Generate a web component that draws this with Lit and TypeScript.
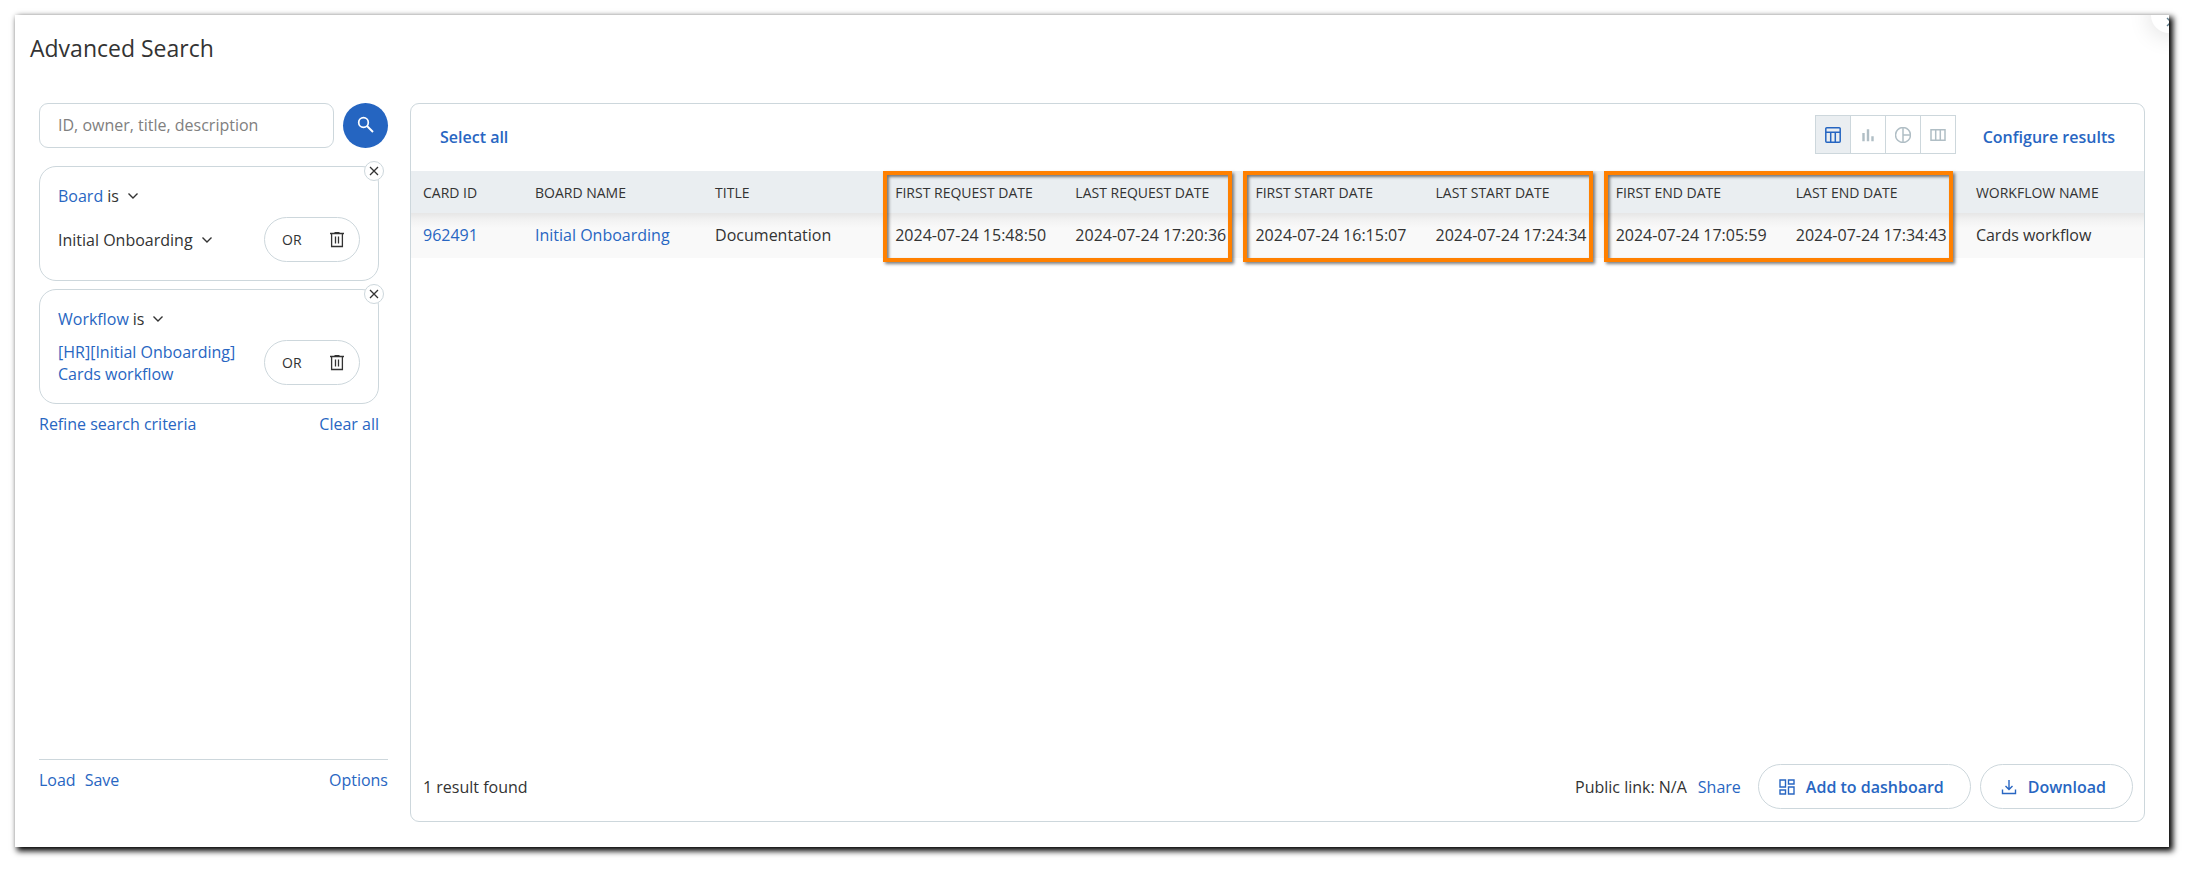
import { LitElement, html, css, svg, nothing } from "lit";
import { customElement, state } from "lit/decorators.js";
import { classMap } from "lit/directives/class-map.js";

const chevron = html`<svg class="chevron" width="12" height="8" viewBox="0 0 12 8" aria-hidden="true">
  <path d="M1.500 1.500 6 6l4.500-4.500" fill="none" stroke="currentColor" stroke-width="1.400" />
</svg>`;

const cross = html`<svg width="10" height="10" viewBox="0 0 10 10" aria-hidden="true">
  <path d="M1 1l8 8M9 1l-8 8" fill="none" stroke="currentColor" stroke-width="1.300" />
</svg>`;

const trash = html`<svg width="14" height="16" viewBox="0 0 14 16" aria-hidden="true">
  <path d="M0 1.500h14M4.500 .7h5M1.600 1.500v13h10.800v-13M5.500 4.500v7M8.500 4.500v7" fill="none" stroke="currentColor" stroke-width="1.300" />
</svg>`;

const viewIcons = {
  table: svg`<path d="M1.800 .8h12.400a1 1 0 0 1 1 1v12.400a1 1 0 0 1-1 1H1.800a1 1 0 0 1-1-1V1.800a1 1 0 0 1 1-1zM1 5.300h14M5.700 5.300V15M10.300 5.300V15" />`,
  bars: svg`<path d="M3.500 6v8.200M8 2.300v11.900M12.500 9.300v4.900" stroke-width="2.400" />`,
  pie: svg`<circle cx="8" cy="8" r="7.500" /><path d="M8 .5v15M8 8h7.500" />`,
  columns: svg`<path d="M1 2.800h14v10.400H1zM5.700 2.800v10.400M10.300 2.800v10.400" />`,
};

type ViewName = keyof typeof viewIcons;

const views: { name: ViewName; label: string }[] = [
  { name: "table", label: "Table" },
  { name: "bars", label: "Bar chart" },
  { name: "pie", label: "Pie chart" },
  { name: "columns", label: "Columns" },
];

const columns: { title: string; value: string; link?: boolean; frame?: boolean }[] = [
  { title: "CARD ID", value: "962491", link: true },
  { title: "BOARD NAME", value: "Initial Onboarding", link: true },
  { title: "TITLE", value: "Documentation" },
  { title: "FIRST REQUEST DATE", value: "2024-07-24 15:48:50", frame: true },
  { title: "LAST REQUEST DATE", value: "2024-07-24 17:20:36" },
  { title: "FIRST START DATE", value: "2024-07-24 16:15:07", frame: true },
  { title: "LAST START DATE", value: "2024-07-24 17:24:34" },
  { title: "FIRST END DATE", value: "2024-07-24 17:05:59", frame: true },
  { title: "LAST END DATE", value: "2024-07-24 17:34:43" },
  { title: "WORKFLOW NAME", value: "Cards workflow" },
];

@customElement("app-root")
export class AppRoot extends LitElement {
  @state() private view: ViewName = "table";

  static styles = css`
    :host {
      display: block;
      box-sizing: border-box;
      height: 100vh;
      padding: 15px 27px 27px 15px;
      background: #fff;
      color: #333;
      font: 16px/22px "Open Sans", "Noto Sans", sans-serif;
    }
    *, *::before, *::after { box-sizing: border-box; }
    a { color: #2866c2; text-decoration: none; }
    button, input, select { font: inherit; color: inherit; margin: 0; padding: 0; }
    button { border: 0; background: none; cursor: pointer; }
    svg { display: block; flex: none; }

    .window {
      position: relative;
      display: flex;
      flex-direction: column;
      height: 100%;
      background: #fff;
      box-shadow: 3px 3px 6px 1px #000;
    }
    .corner {
      position: absolute;
      top: 0;
      right: 0;
      width: 60px;
      height: 60px;
      overflow: hidden;
    }
    .corner-close {
      position: absolute;
      top: -18px;
      right: -18px;
      width: 36px;
      height: 36px;
      border-radius: 50%;
      background: #fff;
      box-shadow: 0 2px 24px rgba(0, 0, 0, 0.14);
      color: #5f7d8c;
    }
    .corner-close svg { position: absolute; left: 15px; top: 20px; }

    .title { margin: 0; padding: 17px 15px 0; font-size: 23px; line-height: 33px; font-weight: 500; }
    .body { flex: 1; display: flex; gap: 22px; padding: 38px 24px 25px 24px; min-height: 0; }

    .side { flex: none; width: 349px; display: flex; flex-direction: column; }
    .search { display: flex; gap: 9px; margin-bottom: 18px; }
    .search-box {
      flex: 1;
      min-width: 0;
      height: 45px;
      padding: 0 18px 2px;
      border: 1px solid #cdd7dc;
      border-radius: 9px;
      background: #fff;
    }
    .search-box::placeholder { color: #808080; opacity: 1; }
    .search-button {
      display: grid;
      place-items: center;
      width: 45px;
      height: 45px;
      padding-bottom: 2px;
      border-radius: 50%;
      background: #2565c1;
      color: #fff;
    }
    .criteria { display: flex; flex-direction: column; gap: 8px; margin-right: 9px; }
    .criterion {
      position: relative;
      display: flex;
      flex-direction: column;
      padding: 18px;
      border: 1px solid #cdd7dc;
      border-radius: 17px;
    }
    .remove {
      position: absolute;
      top: -6px;
      right: -6px;
      display: grid;
      place-items: center;
      width: 20px;
      height: 20px;
      border: 1px solid #cdd7dc;
      border-radius: 50%;
      background: #fff;
    }
    .field { display: flex; gap: 4px; color: #2866c2; }
    .picker { display: flex; align-items: center; gap: 8px; color: #333; }
    .picker select {
      appearance: none;
      border: 0;
      background: none;
      outline: none;
      field-sizing: content;
    }
    .value { display: flex; justify-content: space-between; align-items: center; margin-top: 10px; }
    .value a { width: 190px; }
    .pill {
      display: flex;
      align-items: center;
      justify-content: space-between;
      width: 96px;
      height: 45px;
      padding: 0 15px 0 17px;
      border: 1px solid #cdd7dc;
      border-radius: 23px;
    }
    .or { font-size: 14px; font-weight: 500; line-height: 20px; }
    .row-links { display: flex; justify-content: space-between; margin: 9px 9px 0 0; }
    .side-foot {
      display: flex;
      gap: 9px;
      margin-top: auto;
      padding: 9px 0 31px;
      border-top: 1px solid #cdd7dc;
    }
    .side-foot a:last-child { margin-left: auto; }

    .panel {
      flex: 1;
      min-width: 0;
      display: flex;
      flex-direction: column;
      border: 1px solid #cdd7dc;
      border-radius: 9px;
    }
    .toolbar { display: flex; align-items: center; height: 67px; padding: 0 29px 2px; }
    .strong { color: #2866c2; font-weight: 600; }
    .views { display: flex; margin: 0 27px 4px auto; border: 1px solid #cdd7dc; }
    .view { display: grid; place-items: center; width: 35px; height: 37px; color: #b0bec5; }
    .view:last-child { width: 34px; }
    .view:not(:last-child) { border-right: 1px solid #cdd7dc; }
    .view svg { fill: none; stroke: currentColor; stroke-width: 1.500; }
    .view.on { background: #eaeef1; color: #2565c1; }

    .results { width: 100%; border-collapse: collapse; table-layout: fixed; }
    .results th {
      position: relative;
      height: 42px;
      padding: 2px 0 0 12px;
      background: #eaeef1;
      font-size: 14px;
      line-height: 20px;
      font-weight: 500;
      text-align: left;
      white-space: nowrap;
    }
    .results th:first-child { width: 112px; }
    .results tbody tr { background: linear-gradient(#e6e6e6, #f2f2f2 7px, #f9f9f9 15px); }
    .results td { height: 45px; padding: 0 0 2px 12px; white-space: nowrap; }
    .frame {
      position: absolute;
      z-index: 1;
      top: 0;
      left: 0;
      width: calc(200% - 11px);
      height: 91px;
      border: 4px solid #ff8000;
      box-shadow: 2px 2px 3px rgba(0, 0, 0, 0.5), inset 2px 2px 3px rgba(0, 0, 0, 0.5);
      pointer-events: none;
    }

    .panel-foot { display: flex; align-items: center; margin-top: auto; padding: 0 11px 12px 12px; }
    .public { margin-left: auto; }
    .share { margin: 0 17px 0 11px; }
    .action {
      display: flex;
      align-items: center;
      gap: 11px;
      height: 45px;
      padding: 0 26px 0 20px;
      border: 1px solid #cdd7dc;
      border-radius: 23px;
      background: #fff;
    }
    .action + .action { margin-left: 9px; }
    .action svg { fill: none; stroke: currentColor; stroke-width: 1.400; }
  `;

  private criterion(id: string, name: string, value: unknown) {
    return html`<section class="criterion">
      <button class="remove" aria-label="Remove ${name}">${cross}</button>
      <div class="field">
        <label for=${id}>${name}</label>
        <span class="picker"><select id=${id}><option>is</option></select>${chevron}</span>
      </div>
      <div class="value">
        ${value}
        <div class="pill">
          <button class="or">OR</button>
          <button aria-label="Delete value">${trash}</button>
        </div>
      </div>
    </section>`;
  }

  render() {
    return html`<main class="window">
      <h1 class="title">Advanced Search</h1>
      <div class="corner">
        <button class="corner-close" aria-label="Close">${cross}</button>
      </div>
      <div class="body">
        <aside class="side">
          <form class="search" @submit=${(e: Event) => e.preventDefault()}>
            <input class="search-box" type="text" aria-label="Search cards" placeholder="ID, owner, title, description" />
            <button class="search-button" aria-label="Search">
              <svg width="18" height="18" viewBox="0 0 18 18" aria-hidden="true">
                <circle cx="6.500" cy="6.500" r="4.800" fill="none" stroke="currentColor" stroke-width="1.700" />
                <path d="M10 10l6 6" stroke="currentColor" stroke-width="2" />
              </svg>
            </button>
          </form>
          <div class="criteria">
            ${this.criterion(
              "board-op",
              "Board",
              html`<span class="picker">
                <select aria-label="Board value"><option>Initial Onboarding</option></select>${chevron}
              </span>`
            )}
            ${this.criterion("workflow-op", "Workflow", html`<a href="#workflow">[HR][Initial Onboarding] Cards workflow</a>`)}
          </div>
          <div class="row-links">
            <a href="#refine">Refine search criteria</a>
            <a href="#clear">Clear all</a>
          </div>
          <div class="side-foot">
            <a href="#load">Load</a>
            <a href="#save">Save</a>
            <a href="#options">Options</a>
          </div>
        </aside>

        <section class="panel">
          <div class="toolbar">
            <button class="strong">Select all</button>
            <div class="views">
              ${views.map(
                (v) => html`<button
                  class=${classMap({ view: true, on: v.name === this.view })}
                  aria-label=${v.label}
                  @click=${() => (this.view = v.name)}
                >
                  <svg width="16" height="16" viewBox="0 0 16 16" aria-hidden="true">${viewIcons[v.name]}</svg>
                </button>`
              )}
            </div>
            <button class="strong">Configure results</button>
          </div>
          <table class="results">
            <thead>
              <tr>
                ${columns.map((c) => html`<th scope="col">${c.title}${c.frame ? html`<span class="frame"></span>` : nothing}</th>`)}
              </tr>
            </thead>
            <tbody>
              <tr>
                ${columns.map((c) => html`<td>${c.link ? html`<a href="#card">${c.value}</a>` : c.value}</td>`)}
              </tr>
            </tbody>
          </table>
          <div class="panel-foot">
            <span>1 result found</span>
            <span class="public">Public link: N/A</span>
            <a class="share" href="#share">Share</a>
            <button class="action strong">
              <svg width="16" height="16" viewBox="0 0 16 16" aria-hidden="true">
                <path d="M1 1h5.500v7H1zM9.500 1H15v4H9.500zM1 11h5.500v4H1zM9.500 8H15v7H9.500z" />
              </svg>
              Add to dashboard
            </button>
            <button class="action strong">
              <svg width="16" height="16" viewBox="0 0 16 16" aria-hidden="true">
                <path d="M8 1v9.500M4.500 7 8 10.500 11.500 7M1.500 10.500v4h13v-4" />
              </svg>
              Download
            </button>
          </div>
        </section>
      </div>
    </main>`;
  }
}
